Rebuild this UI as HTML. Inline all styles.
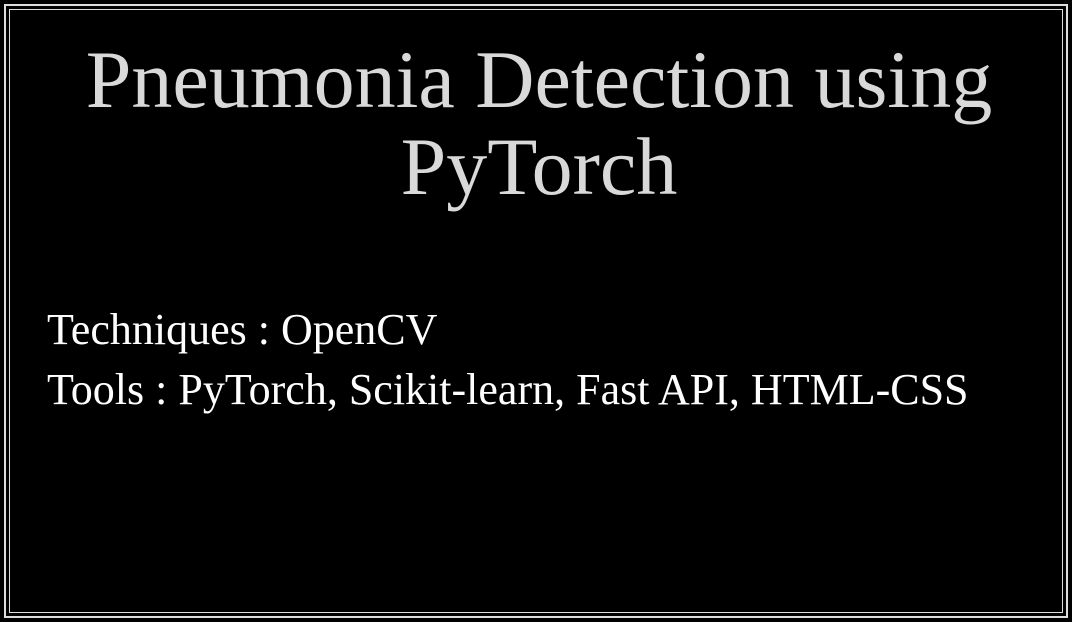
<!DOCTYPE html>
<html><head><style>
html,body{margin:0;padding:0;background:#000;}
body{width:1072px;height:622px;position:relative;overflow:hidden;font-family:"Liberation Serif",serif;}
.b1{position:absolute;left:4px;top:4px;right:4px;bottom:4px;border:2px solid #ddd;}
.b2{position:absolute;left:9px;top:9px;right:9px;bottom:9px;border:1px solid #ddd;}
.t{position:absolute;left:0;width:1078px;text-align:center;color:#d9d9d9;font-size:82px;line-height:82px;white-space:nowrap;}
.x{position:absolute;left:47px;color:#fff;font-size:44px;line-height:44px;white-space:nowrap;}
</style></head><body>
<div class="b1"></div><div class="b2"></div>
<div class="t" style="top:39px">Pneumonia Detection using</div>
<div class="t" style="top:126px">PyTorch</div>
<div class="x" style="top:308px">Techniques : OpenCV</div>
<div class="x" style="top:368px">Tools : PyTorch, Scikit-learn, Fast API, HTML-CSS</div>
</body></html>
